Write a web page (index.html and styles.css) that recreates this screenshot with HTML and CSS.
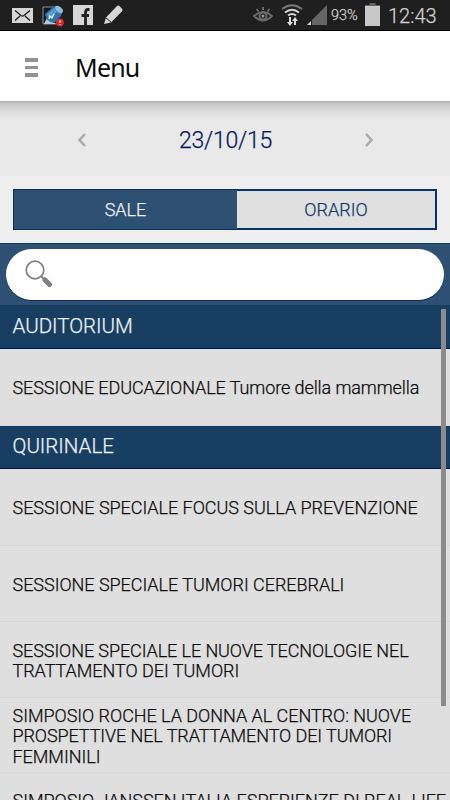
FILE: index.html
```
<!DOCTYPE html>
<html lang="it">
<head>
<meta charset="utf-8">
<title>Menu</title>
<link rel="stylesheet" href="styles.css">
</head>
<body>
<div class="screen">
  <header class="status">
    <div class="status-left">
      <svg class="mail" width="21" height="15" viewBox="0 0 21 15"><path fill="#d6d6d6" d="M0 0h21v15H0z"/><path fill="none" stroke="#222" stroke-width="1.400" d="M3 2.500l6 5q1.500 1 3 0l6-5M3 12.500l5-4.500M18 12.500L13 8"/></svg>
      <svg class="app" width="22" height="22" viewBox="0 0 22 22"><path fill="#17191c" stroke="#8d9194" d="M1 2h14v17H1z"/><path fill="#b5c7d5" d="M2 19l3-6 9 6z"/><path fill="#2f74a8" d="M3 9l9-8q6-1 9 4l-2 6-7 7q-8-1-9-9z"/><path fill="#579dcc" d="M5 9l7-6 3 4-8 8z"/><ellipse cx="17" cy="4.500" rx="2.600" ry="4.500" transform="rotate(-48 17 4.500)" fill="#91bdd6"/><path fill="none" stroke="#e3f1f8" stroke-width="1.300" d="M7 14l1-3 2 2 2-4"/><circle cx="18" cy="17.500" r="4" fill="#d92422"/><path stroke="#fff" stroke-width="1.200" d="M18 15v3M18 19v1"/></svg>
      <svg class="fb" width="20" height="20" viewBox="0 0 20 20"><path fill="#d6d6d6" d="M0 0h20v20H0z"/><path fill="none" stroke="#222" stroke-width="2.800" d="M16.500 4.500H15q-2.500 0-2.500 3.500v12M8.500 10.500h7.500"/></svg>
      <svg class="pencil" width="20" height="20" viewBox="0 0 20 20"><path fill="#d6d6d6" d="M1 19l2-6.500L14 1q1.200-1 2.400 0l2.600 2.800q1 1.200 0 2.400L8 17.500z"/><path stroke="#222" d="M3 13l5 4"/></svg>
    </div>
    <div class="status-right">
      <svg class="eye" width="20" height="17" viewBox="0 0 20 17"><g fill="none" stroke="#686868" stroke-width="2"><path d="M1 10q9-8 18 0-9 9-18 0zM10 1v3M3.500 3l2 2.500M16.500 3l-2 2.500"/><circle cx="10" cy="10" r="3.500"/></g><circle cx="10" cy="10" r="1.500" fill="#999"/></svg>
      <svg class="wifi" width="22" height="23" viewBox="0 0 22 23"><g fill="none" stroke-width="2"><path stroke="#777" d="M1 5q10-7.500 20 0"/><path stroke="#d6d6d6" d="M4 8.500q7-5.500 14 0M7 11.500q4-3 8 0"/></g><path fill="#ddd" d="M8 13h2v5h2l-3 4-3-4h2zM13 21v-4h-2l3-4 3 4h-2v4z"/></svg>
      <svg class="signal" width="21" height="21" viewBox="0 0 21 21"><path fill="#666" d="M20 0v20H5V15z"/><path fill="#d6d6d6" d="M4 16v4H0z"/></svg>
      <span class="percent">93%</span>
      <svg class="battery" width="15" height="23" viewBox="0 0 15 23"><path fill="#666" d="M4.500 0h6v2H15v2H0V2h4.500z"/><path fill="#c8c8c8" d="M0 3h15v20H0z"/></svg>
      <span class="clock">12:43</span>
    </div>
  </header>
  <div class="topbar">
    <div class="burger"><i></i><i></i><i></i></div>
    <h1>Menu</h1>
  </div>
  <div class="datebar">
    <svg width="10" height="16" viewBox="0 0 10 16"><path d="M8 2L2.500 8 8 14"/></svg>
    <span class="date">23/10/15</span>
    <svg width="10" height="16" viewBox="0 0 10 16"><path d="M2 2l5.500 6L2 14"/></svg>
  </div>
  <div class="tabs"><div class="tab active"><span>SALE</span></div><div class="tab"><span>ORARIO</span></div></div>
  <div class="search"><div class="field">
    <svg width="28" height="28" viewBox="0 0 28 28"><circle cx="10" cy="10" r="8.800" fill="none" stroke="#808080" stroke-width="1.700"/><path stroke="#808080" stroke-width="2" d="M16 16l3 3"/><path stroke="#808080" stroke-width="5" stroke-linecap="round" d="M20 20l4.500 4.500"/></svg>
  </div></div>
  <main class="list">
    <h2>AUDITORIUM</h2>
    <div class="row tall"><span class="tighter">SESSIONE EDUCAZIONALE Tumore della mammella</span></div>
    <h2 class="short">QUIRINALE</h2>
    <div class="row tall"><span>SESSIONE SPECIALE FOCUS SULLA PREVENZIONE</span></div>
    <div class="row"><span>SESSIONE SPECIALE TUMORI CEREBRALI</span></div>
    <div class="row"><span class="tighter">SESSIONE SPECIALE LE NUOVE TECNOLOGIE NEL</span><span>TRATTAMENTO DEI TUMORI</span></div>
    <div class="row low"><span>SIMPOSIO ROCHE LA DONNA AL CENTRO: NUOVE</span><span class="tighter">PROSPETTIVE NEL TRATTAMENTO DEI TUMORI</span><span>FEMMINILI</span></div>
    <div class="row last"><span>SIMPOSIO JANSSEN ITALIA ESPERIENZE DI REAL-LIFE</span></div>
    <div class="scrollbar"></div>
  </main>
</div>
</body>
</html>
```
FILE: styles.css
```
* { box-sizing: border-box; }
body { margin: 0; font-family: Roboto, sans-serif; font-weight: 300; color: #0c0c0c; -webkit-text-stroke: .25px currentColor; }
.screen { width: 450px; height: 800px; overflow: hidden; display: flex; flex-direction: column; background: #eee; }
.screen > * { flex-shrink: 0; }
svg { display: block; flex: none; }
.status { height: 31px; background: #1f1f1f; border-bottom: 1px solid #000; display: flex; justify-content: space-between; color: #d0d0d0; }
.status-left, .status-right { display: flex; align-items: flex-start; }
.status-left { padding-left: 12px; }
.mail { margin-top: 8px; }
.app { margin: 5px 0 0 9px; }
.fb { margin: 5px 0 0 9px; }
.pencil { margin: 5px 0 0 10px; }
.status-right { padding-right: 13px; }
.eye { margin: 6px 8px 0 0; }
.wifi { margin: 4px 4px 0 0; }
.signal { margin: 5px 3px 0 0; }
.percent { font-size: 14.500px; line-height: 32px; width: 28px; margin-right: 6px; white-space: nowrap; }
.battery { margin: 3px 8px 0 0; }
.clock { font-size: 20px; line-height: 32px; width: 49px; white-space: nowrap; }
.topbar { height: 70px; background: #fff; display: flex; align-items: center; padding-left: 25px; }
.burger { display: flex; flex-direction: column; gap: 4px; width: 13px; margin-top: 3px; }
.burger i { height: 3.500px; background: #929292; }
h1 { margin: 1px 0 0 37px; font: 400 25px/34px "Noto Sans", sans-serif; letter-spacing: -.8px; -webkit-text-stroke: 0; }
.datebar { height: 75px; background: linear-gradient(#aaa 0, #c4c4c4 2px, #d9d9d9 9px, #e4e4e4 15px, #e9e9e9 18px); display: flex; align-items: center; justify-content: space-between; padding: 2px 76px 0 77px; }
.datebar path { fill: none; stroke: #aaa; stroke-width: 2.500; }
.date { font-size: 23px; color: #06185c; letter-spacing: -.2px; padding-top: 1px; }
.tabs { height: 41px; margin: 13px 13px; display: flex; }
.tab { flex: 1; background: #e0e0e0; border: 2px solid #063467; border-left: 0; color: #12386b; display: flex; align-items: center; justify-content: center; font-size: 18px; }
.tab.active { flex: 0 0 224px; background: #2e5073; border: 1px solid #0c2c5c; border-right: 0; color: #eef2f6; }
.search { height: 62px; background: #2e5073; border-top: 1px solid #0b3c6a; padding: 4.500px 6px; }
.field { height: 51px; border-radius: 26px; background: #fff; box-shadow: 0 1px #0a2c5c; padding: 11.500px 0 0 19px; }
.list { position: relative; flex: 1; background: #dfdfdf; }
h2 { margin: 0; height: 44px; background: #183e62; border-bottom: 1px solid #06164c; color: #eef1f4; font-weight: 300; font-size: 20.500px; line-height: 43px; padding-left: 12.500px; }
h2.short { height: 43px; line-height: 41px; }
.row { height: 76px; padding: 3px 0 0 12.500px; border-bottom: 1px solid #d7d7d7; display: flex; flex-direction: column; align-items: flex-start; justify-content: center; font-size: 18px; line-height: 20.500px; letter-spacing: -.03px; white-space: nowrap; }
.tall { height: 77px; }
.low { height: 75px; }
.tighter { letter-spacing: -.09px; }
.last { padding-top: 18px; justify-content: flex-start; }
.scrollbar { position: absolute; left: 441px; top: 4px; width: 5px; height: 397px; background: #8b8b8b; }
```
